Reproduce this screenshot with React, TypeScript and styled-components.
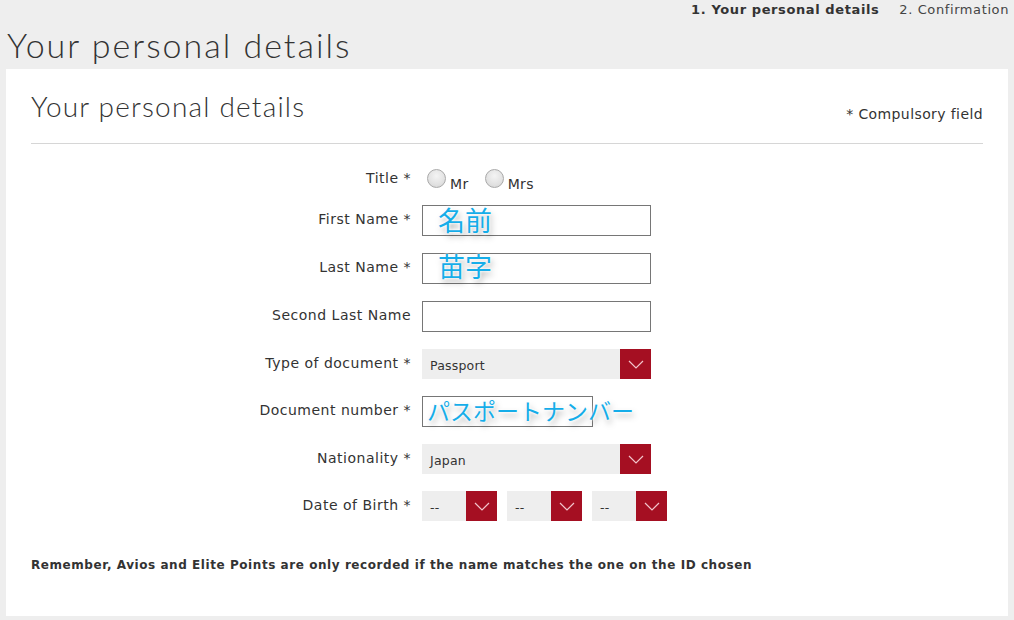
import React from "react";
import styled, { createGlobalStyle } from "styled-components";

const Global = createGlobalStyle`
  html, body { margin: 0; padding: 0; background: #eeeeee; }
  body { font-family: "DejaVu Sans", Verdana, sans-serif; color: #333; }
  * { box-sizing: border-box; }
`;

const Page = styled.div`
  width: 1014px;
  height: 620px;
  padding: 0 6px 4px 6px;
  display: flex;
  flex-direction: column;
`;

const Steps = styled.ol`
  list-style: none;
  margin: 0;
  padding: 2px 0 0 0;
  height: 23px;
  display: flex;
  justify-content: flex-end;
  gap: 20px;
  font-size: 13px;
  line-height: 16px;
  letter-spacing: 0.6px;
`;

const Step = styled.li<{ $active?: boolean }>`
  font-weight: ${(p) => (p.$active ? 700 : 400)};
  color: ${(p) => (p.$active ? "#333" : "#444")};
  margin-right: ${(p) => (p.$active ? 0 : -1)}px;
`;

const PageTitle = styled.h1`
  margin: 0 0 2px 1px;
  font-family: Lato, "Open Sans", sans-serif;
  font-weight: 300;
  font-size: 34px;
  line-height: 44px;
  color: #333;
  letter-spacing: 2px;
`;

const Card = styled.section`
  flex: 1;
  background: #fff;
  padding: 20px 25px 0 25px;
  display: flex;
  flex-direction: column;
`;

const CardHeader = styled.header`
  display: flex;
  justify-content: space-between;
  align-items: baseline;
  border-bottom: 1px solid #d6d6d6;
  padding-bottom: 20px;
`;

const CardTitle = styled.h2`
  margin: 0;
  font-family: Lato, "Open Sans", sans-serif;
  font-weight: 300;
  font-size: 28px;
  line-height: 34px;
  color: #333;
  letter-spacing: 1.2px;
`;

const Compulsory = styled.span`
  font-size: 14px;
  color: #333;
  position: relative;
  top: 2px;
  letter-spacing: 0.4px;
`;

const Form = styled.div`
  display: grid;
  grid-template-columns: 380px 1fr;
  column-gap: 11px;
  row-gap: 17px;
  margin-top: 24px;
`;

const Label = styled.label<{ $pad?: number }>`
  text-align: right;
  font-size: 14px;
  line-height: 18px;
  padding-top: ${(p) => p.$pad ?? 5}px;
  color: #333;
  letter-spacing: 0.5px;
`;

const Field = styled.div`
  position: relative;
  display: flex;
  align-items: center;
  gap: 10px;
`;

const RadioGroup = styled.div`
  display: flex;
  align-items: center;
  gap: 16px;
  padding-left: 5px;
  height: 20px;
`;

const RadioOption = styled.label`
  display: flex;
  align-items: flex-end;
  gap: 4px;
  font-size: 14px;
  color: #333;
  letter-spacing: 0.4px;
`;

const RadioCircle = styled.span`
  width: 19px;
  height: 19px;
  border-radius: 50%;
  border: 1px solid #a9a9a9;
  background: radial-gradient(circle at 50% 35%, #f4f4f4 0%, #e2e2e2 60%, #d2d2d2 100%);
  display: inline-block;
`;

const RadioText = styled.span`
  position: relative;
  top: 4px;
`;

const TextInput = styled.input<{ $w?: number }>`
  width: ${(p) => p.$w ?? 229}px;
  height: 31px;
  border: 1px solid #767676;
  border-radius: 0;
  background: #fff;
  padding: 0 6px;
  font-size: 13px;
  font-family: inherit;
  outline: none;
`;

const Select = styled.div<{ $w: number }>`
  width: ${(p) => p.$w}px;
  height: 30px;
  background: #eeeeee;
  display: flex;
  align-items: center;
  justify-content: space-between;
`;

const SelectValue = styled.span`
  font-size: 12.5px;
  padding-left: 8px;
  color: #333;
  position: relative;
  top: 1px;
  letter-spacing: 0.2px;
`;

const SelectArrow = styled.span`
  width: 31px;
  height: 30px;
  background: #a50f22;
  display: flex;
  align-items: center;
  justify-content: center;
`;

const Annotation = styled.span<{ $left: number; $size: number; $top: number }>`
  position: absolute;
  left: ${(p) => p.$left}px;
  top: ${(p) => p.$top}px;
  font-family: "Noto Sans CJK JP", sans-serif;
  font-size: ${(p) => p.$size}px;
  line-height: 1;
  color: #15ade9;
  white-space: nowrap;
  pointer-events: none;
  text-shadow: 0 0 3px #fff, 0 0 3px #fff, 2px 4px 6px rgba(0, 0, 0, 0.35);
`;

const Note = styled.p`
  margin: 37px 0 0 0;
  font-size: 12px;
  font-weight: 700;
  color: #333;
  letter-spacing: 0.56px;
`;

const Chevron = () => (
  <svg width="16" height="9" viewBox="0 0 16 9">
    <polyline points="1,1 8,8 15,1" fill="none" stroke="#f2c4cb" strokeWidth="1.2" />
  </svg>
);

const SelectBox = ({ w, value }: { w: number; value: string }) => (
  <Select $w={w}>
    <SelectValue>{value}</SelectValue>
    <SelectArrow>
      <Chevron />
    </SelectArrow>
  </Select>
);

export default function App() {
  return (
    <>
      <Global />
      <Page>
        <Steps>
          <Step $active>1. Your personal details</Step>
          <Step>2. Confirmation</Step>
        </Steps>
        <PageTitle>Your personal details</PageTitle>
        <Card>
          <CardHeader>
            <CardTitle>Your personal details</CardTitle>
            <Compulsory>* Compulsory field</Compulsory>
          </CardHeader>
          <Form>
            <Label $pad={1}>Title *</Label>
            <RadioGroup>
              <RadioOption>
                <RadioCircle />
                <RadioText>Mr</RadioText>
              </RadioOption>
              <RadioOption>
                <RadioCircle />
                <RadioText>Mrs</RadioText>
              </RadioOption>
            </RadioGroup>

            <Label>First Name *</Label>
            <Field>
              <TextInput />
              <Annotation $left={16} $top={1} $size={27}>名前</Annotation>
            </Field>

            <Label>Last Name *</Label>
            <Field>
              <TextInput />
              <Annotation $left={16} $top={-1} $size={27}>苗字</Annotation>
            </Field>

            <Label>Second Last Name</Label>
            <Field>
              <TextInput />
            </Field>

            <Label>Type of document *</Label>
            <Field>
              <SelectBox w={229} value="Passport" />
            </Field>

            <Label>Document number *</Label>
            <Field>
              <TextInput $w={171} />
              <Annotation $left={5} $top={3} $size={23}>パスポートナンバー</Annotation>
            </Field>

            <Label>Nationality *</Label>
            <Field>
              <SelectBox w={229} value="Japan" />
            </Field>

            <Label>Date of Birth *</Label>
            <Field>
              <SelectBox w={75} value="--" />
              <SelectBox w={75} value="--" />
              <SelectBox w={75} value="--" />
            </Field>
          </Form>
          <Note>Remember, Avios and Elite Points are only recorded if the name matches the one on the ID chosen</Note>
        </Card>
      </Page>
    </>
  );
}
